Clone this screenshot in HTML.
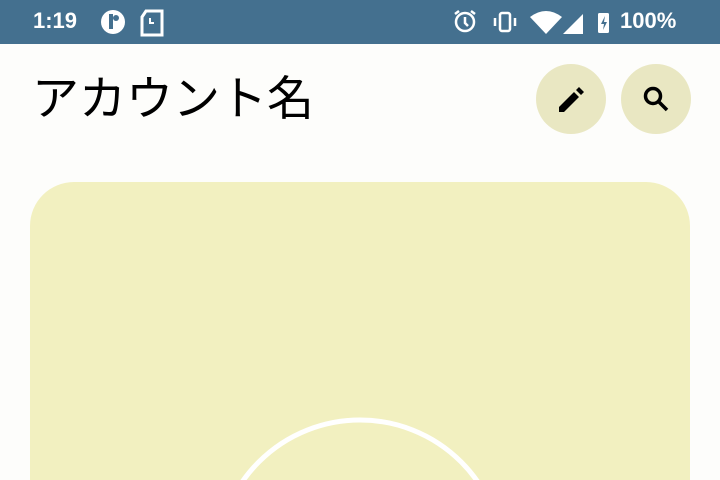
<!DOCTYPE html>
<html><head><meta charset="utf-8"><style>
html,body{margin:0;width:720px;height:480px;overflow:hidden}
body{background:#fdfdfb;font-family:"Liberation Sans","Noto Sans CJK JP",sans-serif;position:relative}
.sb{position:absolute;left:0;top:0;width:720px;height:44px;background:#44708f;color:#fff}
.t{position:absolute;left:33px;top:8px;font-size:22px;font-weight:bold}
.title{position:absolute;left:32px;top:69px;font-size:47px;color:#000;line-height:60px}
.btn{position:absolute;top:64px;width:70px;height:70px;border-radius:50%;background:#e9e7c2}
.card{position:absolute;left:30px;top:182px;width:660px;height:298px;border-radius:44px 44px 0 0;background:#f2f0c0;overflow:hidden}
</style></head><body>
<div class="sb">
<div class="t">1:19</div>
<svg style="position:absolute;left:100px;top:9px" width="70" height="28">
<circle cx="13" cy="13" r="12" fill="#fff"/><rect x="9" y="5" width="4" height="15" fill="#44708f"/><circle cx="16" cy="9" r="3" fill="#44708f"/>
<path d="M46 2h16v24h-20v-18z" fill="none" stroke="#fff" stroke-width="3"/><path d="M50 9v5h4" fill="none" stroke="#fff" stroke-width="2"/>
</svg>
<svg style="position:absolute;left:450px;top:8px" width="170" height="28">
<circle cx="15" cy="14" r="9" fill="none" stroke="#fff" stroke-width="2.5"/><path d="M15 9v6l3 3M5 6l4-3M25 6l-4-3" stroke="#fff" stroke-width="2.5" fill="none"/>
<rect x="50" y="5" width="10" height="18" rx="2" fill="none" stroke="#fff" stroke-width="2.5"/><path d="M45 10v8M65 10v8" stroke="#fff" stroke-width="2.5"/>
<path d="M80 9q16-12 32 0l-16 17z" fill="#fff"/>
<path d="M113 26l20-20v20z" fill="#fff"/>
<rect x="148" y="5" width="11" height="20" rx="1.5" fill="#fff"/><path d="M155 8l-4 8h3l-1 6 4-8h-3z" fill="#44708f"/>
</svg>
<div class="t" style="left:620px">100%</div>
</div>
<div class="title">アカウント名</div>
<div class="btn" style="left:536px"><svg width="70" height="70" viewBox="0 0 70 70"><path d="M23 43v5h5l15-15-5-5zM40 26l5 5 3-3-5-5z" fill="#000"/></svg></div>
<div class="btn" style="left:621px"><svg width="70" height="70" viewBox="0 0 70 70"><circle cx="32" cy="32" r="7.5" fill="none" stroke="#000" stroke-width="3.5"/><path d="M37 37l9 9" stroke="#000" stroke-width="3.5"/></svg></div>
<div class="card"><svg width="660" height="298"><circle cx="330" cy="381" r="143" fill="none" stroke="#fff" stroke-width="5"/></svg></div>
</body></html>
